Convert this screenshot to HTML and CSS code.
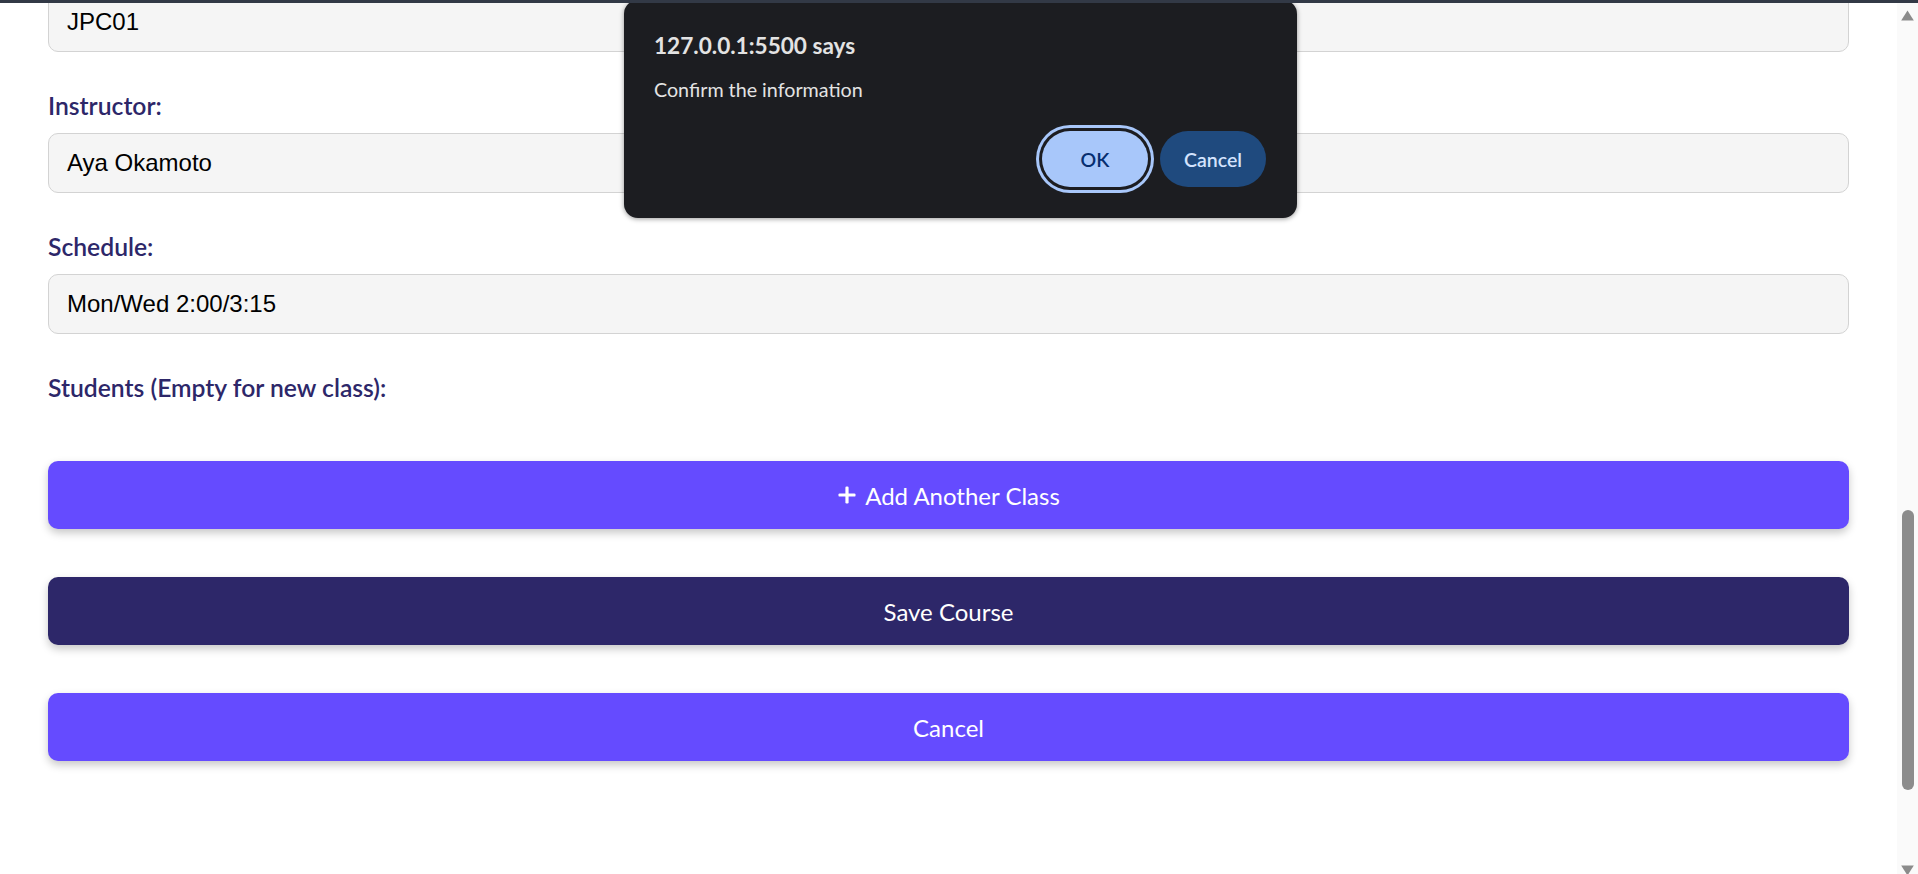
FILE: index.html
```html
<!DOCTYPE html>
<html lang="en">
<head>
<meta charset="utf-8">
<title>Edit Course</title>
<link rel="stylesheet" href="styles.css">
</head>
<body>
<div class="topbar"></div>
<div class="window">
  <main class="page">
    <form class="course-form">
      <div class="form-group first">
        <div class="field" role="textbox">JPC01</div>
      </div>
      <div class="form-group">
        <label class="label">Instructor:</label>
        <div class="field" role="textbox">Aya Okamoto</div>
      </div>
      <div class="form-group">
        <label class="label">Schedule:</label>
        <div class="field" role="textbox">Mon/Wed 2:00/3:15</div>
      </div>
      <div class="form-group">
        <label class="label">Students (Empty for new class):</label>
        <div class="student-list"></div>
      </div>
      <button type="button" class="btn btn-primary">
        <svg class="plus" width="20" height="20" viewBox="0 0 20 20" aria-hidden="true"><rect x="8.4" y="1.5" width="3.2" height="17" rx="1.2" fill="#fff"/><rect x="1.5" y="8.4" width="17" height="3.2" rx="1.2" fill="#fff"/></svg>
        <span>Add Another Class</span>
      </button>
      <button type="button" class="btn btn-dark">Save Course</button>
      <button type="button" class="btn btn-primary">Cancel</button>
    </form>
  </main>
  <div class="scrollbar">
    <svg class="arrow" width="13" height="11" viewBox="0 0 13 11" aria-hidden="true"><polygon points="6.5,0.5 12.8,10.5 0.2,10.5" fill="#8b8b8b"/></svg>
    <div class="thumb"></div>
    <svg class="arrow down" width="13" height="11" viewBox="0 0 13 11" aria-hidden="true"><polygon points="0.2,0.5 12.8,0.5 6.5,10.5" fill="#8b8b8b"/></svg>
  </div>
</div>
<div class="dialog" role="dialog">
  <div class="dialog-title">127.0.0.1:5500 says</div>
  <div class="dialog-msg">Confirm the information</div>
  <div class="dialog-actions">
    <button type="button" class="dbtn dbtn-ok">OK</button>
    <button type="button" class="dbtn dbtn-cancel">Cancel</button>
  </div>
</div>
</body>
</html>
```
FILE: styles.css
```css
* { box-sizing: border-box; }
html, body {
  margin: 0;
  height: 100%;
  overflow: hidden;
  background: #ffffff;
}
body {
  font-family: Lato, "Open Sans", sans-serif;
  position: relative;
}
.topbar {
  height: 3px;
  background: #323946;
  position: relative;
  z-index: 5;
}
.window {
  display: flex;
  height: calc(100% - 3px);
}
.page {
  flex: 1;
  overflow: hidden;
  padding: 0 48px;
}
.course-form {
  display: flex;
  flex-direction: column;
}
.form-group {
  margin-bottom: 38px;
}
.form-group.first {
  margin-top: -11px;
}
.label {
  display: block;
  font-family: Lato, sans-serif;
  font-weight: 600;
  font-size: 24.7px;
  line-height: 32px;
  color: #2d2769;
  margin-bottom: 11px;
}
.field {
  height: 60px;
  display: flex;
  align-items: center;
  padding: 0 18px;
  background: #f5f5f5;
  border: 1px solid #d3d3d3;
  border-radius: 10px;
  font-family: "Liberation Sans", Arial, sans-serif;
  font-size: 24px;
  color: #000;
}
.student-list {
  min-height: 8px;
}
.btn {
  display: flex;
  align-items: center;
  justify-content: center;
  gap: 8px;
  height: 68px;
  width: 100%;
  margin: 0 0 48px;
  border: none;
  border-radius: 10px;
  font-family: Lato, sans-serif;
  font-size: 24px;
  color: #ffffff;
  box-shadow: 0 4px 9px rgba(0, 0, 0, 0.22);
  cursor: pointer;
}
.btn-primary { background: #654bff; }
.btn-dark { background: #2d2769; }
.plus { display: block; }

.scrollbar {
  width: 21px;
  background: #fafafa;
  display: flex;
  flex-direction: column;
  align-items: center;
  padding-top: 7px;
}
.arrow { display: block; flex: none; }
.thumb {
  flex: none;
  width: 12px;
  height: 280px;
  margin-top: 489px;
  border-radius: 6px;
  background: #8c8c8c;
}
.arrow.down {
  margin-top: 75px;
}

.dialog {
  position: absolute;
  top: 0;
  left: 624px;
  width: 673px;
  height: 218px;
  background: #1c1d21;
  border-radius: 14px;
  box-shadow: 0 1px 5px rgba(0, 0, 0, 0.4);
  padding: 32px 31px 31px 30px;
  display: flex;
  flex-direction: column;
  z-index: 3;
  color: #e3e3e3;
  font-family: Lato, sans-serif;
}
.dialog-title {
  font-weight: 700;
  font-size: 22.6px;
  line-height: 28px;
}
.dialog-msg {
  margin-top: 17px;
  font-size: 19.7px;
  line-height: 26px;
}
.dialog-actions {
  margin-top: auto;
  display: flex;
  justify-content: flex-end;
  gap: 12px;
}
.dbtn {
  width: 106px;
  height: 56px;
  border: none;
  border-radius: 28px;
  font-family: Lato, sans-serif;
  font-weight: 600;
  font-size: 19.5px;
  cursor: pointer;
}
.dbtn-ok {
  background: #a8c7fa;
  color: #062e6f;
  box-shadow: 0 0 0 3px #1c1d21, 0 0 0 6px #a8c7fa;
}
.dbtn-cancel {
  background: #1f4a7e;
  color: #d3e3fd;
}
```
